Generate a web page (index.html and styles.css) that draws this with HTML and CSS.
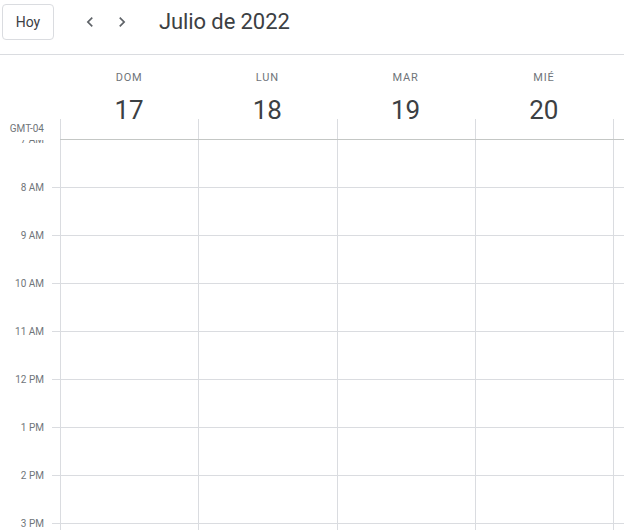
FILE: index.html
```html
<!DOCTYPE html>
<html lang="es">
<head>
<meta charset="utf-8">
<title>Calendario</title>
<link rel="stylesheet" href="styles.css">
</head>
<body>
<div class="app">
  <header class="topbar">
    <button class="today-btn">Hoy</button>
    <div class="nav">
      <button class="icon-btn" aria-label="Anterior">
        <svg viewBox="0 0 24 24" width="20" height="20"><path d="M15.41 7.41L14 6l-6 6 6 6 1.41-1.41L10.83 12z"/></svg>
      </button>
      <button class="icon-btn" aria-label="Siguiente">
        <svg viewBox="0 0 24 24" width="20" height="20"><path d="M8.59 16.59L10 18l6-6-6-6-1.41 1.41L13.17 12z"/></svg>
      </button>
    </div>
    <h1 class="title">Julio de 2022</h1>
  </header>

  <div class="day-header">
    <div class="tz">GMT-04</div>
    <div class="days">
      <div class="day"><div class="dow">DOM</div><div class="num">17</div><div class="stub"></div></div>
      <div class="day"><div class="dow">LUN</div><div class="num">18</div><div class="stub"></div></div>
      <div class="day"><div class="dow">MAR</div><div class="num">19</div><div class="stub"></div></div>
      <div class="day"><div class="dow">MIÉ</div><div class="num">20</div><div class="stub"></div></div>
      <div class="day"><div class="dow"></div><div class="num"></div><div class="stub"></div></div>
    </div>
  </div>

  <div class="grid-area">
    <div class="times">
      <div class="labels">
        <div class="hour">7 AM</div>
        <div class="hour">8 AM</div>
        <div class="hour">9 AM</div>
        <div class="hour">10 AM</div>
        <div class="hour">11 AM</div>
        <div class="hour">12 PM</div>
        <div class="hour">1 PM</div>
        <div class="hour">2 PM</div>
        <div class="hour">3 PM</div>
        <div class="hour">4 PM</div>
      </div>
    </div>
    <div class="tick"></div>
    <div class="cols">
      <div class="col"></div>
      <div class="col"></div>
      <div class="col"></div>
      <div class="col"></div>
      <div class="col"></div>
    </div>
  </div>
</div>
</body>
</html>
```

FILE: styles.css
```css
html, body {
  margin: 0;
  padding: 0;
  background: #fff;
}
body {
  font-family: Roboto, "Noto Sans", "Liberation Sans", sans-serif;
  color: #3c4043;
  width: 624px;
  height: 530px;
  overflow: hidden;
}
.app {
  display: flex;
  flex-direction: column;
  height: 530px;
}
.topbar {
  display: flex;
  align-items: flex-start;
  height: 50px;
  padding-top: 4px;
  box-sizing: content-box;
  border-bottom: 1px solid #dadce0;
}
.today-btn {
  margin-left: 2px;
  width: 52px;
  height: 36px;
  border: 1px solid #dadce0;
  border-radius: 4px;
  background: #fff;
  font-family: inherit;
  font-size: 14px;
  font-weight: 400;
  color: #3c4043;
  padding: 0;
}
.nav {
  display: flex;
  margin-left: 20px;
  height: 36px;
  align-items: center;
}
.icon-btn {
  width: 32px;
  height: 32px;
  border: 0;
  padding: 0;
  background: transparent;
  display: flex;
  align-items: center;
  justify-content: center;
}
.icon-btn svg {
  fill: #5f6368;
}
.title {
  margin: 0 0 0 21px;
  font-size: 22px;
  font-weight: 400;
  line-height: 36px;
  color: #3c4043;
  letter-spacing: -0.1px;
}
.day-header {
  display: flex;
  height: 85px;
  flex: none;
}
.tz {
  width: 44px;
  padding-right: 16px;
  text-align: right;
  font-size: 10px;
  line-height: 14px;
  color: #70757a;
  align-self: flex-end;
  padding-bottom: 4px;
  flex: none;
}
.days {
  display: grid;
  grid-template-columns: repeat(5, 138.25px);
  border-bottom: 1px solid #c4c7c5;
  flex: none;
  overflow: hidden;
}
.day {
  display: flex;
  flex-direction: column;
  align-items: center;
  padding-top: 15px;
}
.dow {
  font-size: 11px;
  font-weight: 400;
  line-height: 16px;
  height: 16px;
  letter-spacing: 0.8px;
  color: #70757a;
}
.num {
  margin-top: 15px;
  font-size: 26px;
  line-height: 18px;
  height: 18px;
  color: #3c4043;
}
.stub {
  align-self: stretch;
  height: 20px;
  border-left: 1px solid #dadce0;
}
.grid-area {
  display: flex;
  flex: 1;
  overflow: hidden;
}
.times {
  width: 52px;
  flex: none;
  overflow: hidden;
}
.labels {
  margin-top: -7px;
}
.hour {
  height: 48px;
  box-sizing: border-box;
  padding-right: 8px;
  text-align: right;
  font-size: 10px;
  line-height: 14px;
  color: #70757a;
}
.tick {
  width: 8px;
  flex: none;
  background: repeating-linear-gradient(to bottom, transparent 0 47px, #dadce0 47px 48px);
}
.cols {
  display: grid;
  grid-template-columns: repeat(5, 138.25px);
  flex: none;
  background: repeating-linear-gradient(to bottom, transparent 0 47px, #dadce0 47px 48px);
}
.col {
  border-left: 1px solid #dadce0;
}
```
